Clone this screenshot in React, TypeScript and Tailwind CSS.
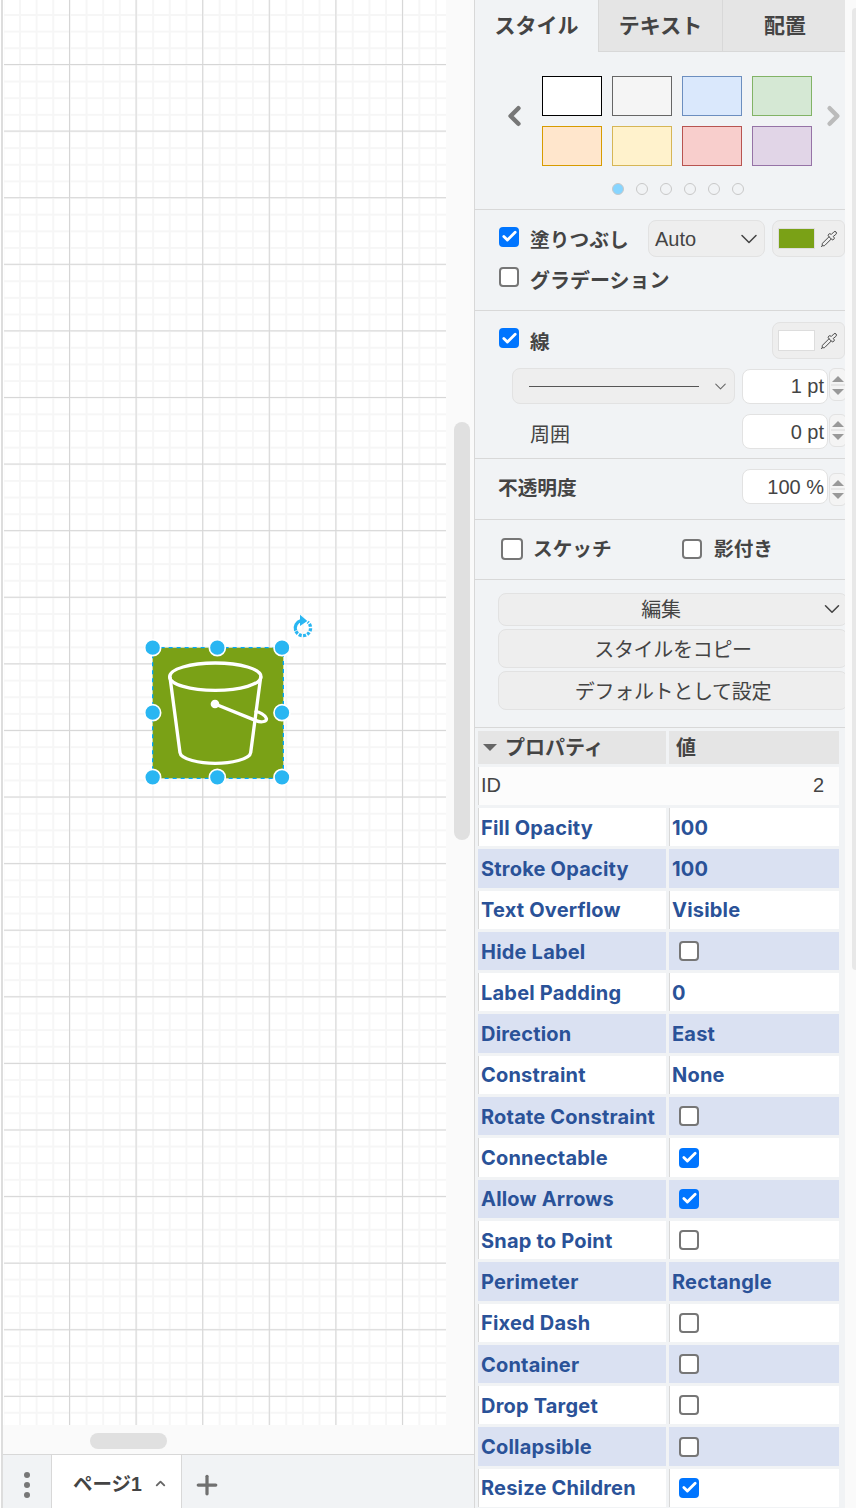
import { Check, ChevronDown, ChevronLeft, ChevronRight, ChevronUp, Pipette, Plus } from "lucide-react";

const swatches = [
  "bg-[#ffffff] border-[#000000]",
  "bg-[#f5f5f5] border-[#666666]",
  "bg-[#dae8fc] border-[#6c8ebf]",
  "bg-[#d5e8d4] border-[#82b366]",
  "bg-[#ffe6cc] border-[#d79b00]",
  "bg-[#fff2cc] border-[#d6b656]",
  "bg-[#f8cecc] border-[#b85450]",
  "bg-[#e1d5e7] border-[#9673a6]",
];

type Prop = { name: string; value?: string; checked?: boolean };

const props: Prop[] = [
  { name: "Fill Opacity", value: "100" },
  { name: "Stroke Opacity", value: "100" },
  { name: "Text Overflow", value: "Visible" },
  { name: "Hide Label", checked: false },
  { name: "Label Padding", value: "0" },
  { name: "Direction", value: "East" },
  { name: "Constraint", value: "None" },
  { name: "Rotate Constraint", checked: false },
  { name: "Connectable", checked: true },
  { name: "Allow Arrows", checked: true },
  { name: "Snap to Point", checked: false },
  { name: "Perimeter", value: "Rectangle" },
  { name: "Fixed Dash", checked: false },
  { name: "Container", checked: false },
  { name: "Drop Target", checked: false },
  { name: "Collapsible", checked: false },
  { name: "Resize Children", checked: true },
];

function Box({ checked = false, big = false, className = "" }: { checked?: boolean; big?: boolean; className?: string }) {
  const size = big ? "w-[22px] h-[22px]" : "w-5 h-5";
  if (checked) {
    return (
      <span className={`${size} shrink-0 rounded-[4px] bg-[#0075ff] flex items-center justify-center ${className}`}>
        <Check size={17} strokeWidth={4} className="text-white" />
      </span>
    );
  }
  return <span className={`${size} block shrink-0 rounded-[4px] bg-white border-2 border-[#767676] ${className}`} />;
}

function ColorButton({ color }: { color: string }) {
  return (
    <div className="w-[73px] h-[37px] shrink-0 rounded-l-lg rounded-r-md bg-[#eeeeee] border border-[#e2e2e2] flex items-center pl-[5px] gap-[5px]">
      <span className={`w-[37px] h-[21px] border border-[#dddddd] ${color}`} />
      <Pipette size={18} strokeWidth={1.3} className="text-[#444444]" />
    </div>
  );
}

function Spinner({ y = "" }: { y?: string }) {
  return (
    <div className={`w-[18px] h-[33px] shrink-0 rounded-md border border-[#e2e2e2] bg-[#f4f4f4] flex flex-col items-center justify-center ${y}`}>
      <svg width="14" height="24" viewBox="0 0 14 24">
        <path d="M7 3 L13 9 H1 Z" fill="#999999" />
        <path d="M0 12 H14" stroke="#d8d8d8" strokeWidth="1" />
        <path d="M7 22 L1 16 H13 Z" fill="#999999" />
      </svg>
    </div>
  );
}

function NumberInput({ value }: { value: string }) {
  return (
    <div className="w-[86px] h-[35px] shrink-0 rounded-lg bg-white border border-[#e2e2e2] flex items-center justify-end pr-[3px] text-[20px] leading-none text-[#444444]">
      {value}
    </div>
  );
}

function ActionButton({ label, h, pad = "" }: { label: string; h: string; pad?: string }) {
  return (
    <div className={`w-[350px] ${h} ${pad} shrink-0 rounded-lg bg-[#eeeeee] border border-[#e2e2e2] flex items-center justify-center text-[20px] tracking-[-0.3px] text-[#444444]`}>
      {label}
    </div>
  );
}

function Canvas() {
  const handles = [
    [68, 143], [262, 143], [456, 143],
    [68, 338], [456, 338],
    [68, 532], [262, 532], [456, 532],
  ];
  return (
    <div className="relative flex-1 ml-[2px] bg-white bg-[linear-gradient(#d6d6d6_1px,transparent_1px),linear-gradient(90deg,#d6d6d6_1px,transparent_1px),linear-gradient(#f6f6f6_1.5px,transparent_1.5px),linear-gradient(90deg,#f6f6f6_1.5px,transparent_1.5px)] bg-[size:66.6px_66.6px,66.6px_66.6px,16.65px_16.65px,16.65px_16.65px] bg-[position:65px_64px,65px_64px,15px_14px,15px_14px]">
      {/* selected bucket shape, coords are 3x of the page */}
      <svg className="absolute left-[126px] top-[600px]" width="200" height="200" viewBox="0 0 600 600">
        <rect x="68" y="143" width="392" height="392" fill="#7aa116" />
        <rect x="68" y="143" width="392" height="392" fill="none" stroke="#00a8ff" strokeWidth="4" strokeDasharray="12 12" />
        <g fill="none" stroke="#ffffff" strokeWidth="10" strokeLinecap="round" strokeLinejoin="round">
          <ellipse cx="256" cy="230" rx="137" ry="41" />
          <path d="M120 232 L150 458 C152 478 210 490 256 490 C302 490 360 478 362 458 L392 232" />
          <path d="M255 312 L378 362 C395 369 412 364 409 355 C406 345 388 336 378 335" />
        </g>
        <circle cx="255" cy="312" r="13" fill="#ffffff" />
        {handles.map(([cx, cy]) => (
          <circle key={`${cx}-${cy}`} cx={cx} cy={cy} r="24" fill="#29b6f2" stroke="#ffffff" strokeWidth="5" />
        ))}
        <g fill="none" stroke="#29b6f2" strokeWidth="10">
          <path d="M513 62 A23 23 0 0 0 497 92" />
          <path d="M498 94 A23 23 0 1 0 533 66" strokeDasharray="9 4" />
        </g>
        <path d="M510 44 L532 63 L510 78 Z" fill="#29b6f2" />
      </svg>
    </div>
  );
}

function Footer() {
  return (
    <div className="h-[54px] flex border-t border-[#d8d8d8] bg-[#f1f3f5]">
      <div className="w-[49px] flex flex-col items-center pt-[17px] gap-[4px] border-r border-[#d8d8d8]">
        <span className="w-[6px] h-[6px] rounded-full bg-[#777777]" />
        <span className="w-[6px] h-[6px] rounded-full bg-[#777777]" />
        <span className="w-[6px] h-[6px] rounded-full bg-[#777777]" />
      </div>
      <div className="w-[130px] bg-white border-r border-[#d8d8d8] flex items-center pt-[6px] pl-[21px] gap-[11px] text-[19.5px] font-bold text-[#444444]">
        <span>ページ1</span>
        <ChevronUp size={15} strokeWidth={3} className="text-[#666666] -mt-[3px]" />
      </div>
      <div className="flex items-center pl-[10px] pt-[6px]">
        <Plus size={30} strokeWidth={2.6} className="text-[#707070]" />
      </div>
    </div>
  );
}

function StylePanel() {
  return (
    <div className="w-[370px] shrink-0 overflow-hidden bg-[#f1f3f5] text-[#444444]">
      <div className="h-[52px] flex text-[21px] font-bold">
        <div className="w-[124px] flex items-center justify-center border-r border-[#d8d8d8]">スタイル</div>
        <div className="w-[124px] flex items-center justify-center bg-[#e5e5e5] border-r border-b border-[#d8d8d8]">テキスト</div>
        <div className="flex-1 flex items-center justify-center pl-[2px] bg-[#e5e5e5] border-b border-[#d8d8d8]">配置</div>
      </div>

      <div className="h-[158px] border-b border-[#d8d8d8] pt-[24px]">
        <div className="flex items-center pl-[28px]">
          <ChevronLeft size={32} strokeWidth={3.5} className="text-[#777777] -mx-[4px] -mt-[10px]" />
          <div className="grid grid-cols-[60px_60px_60px_60px] gap-x-[10px] gap-y-[10px] ml-[16px] mr-[10px]">
            {swatches.map((s) => (
              <span key={s} className={`h-[40px] border ${s}`} />
            ))}
          </div>
          <ChevronRight size={32} strokeWidth={3.5} className="text-[#bbbbbb] -mx-[4px] -mt-[10px]" />
        </div>
        <div className="flex justify-center gap-[12px] mt-[17px] pl-[35px]">
          <span className="w-3 h-3 rounded-full bg-[#87d5ff] border border-[#c8c8c8]" />
          {[1, 2, 3, 4, 5].map((i) => (
            <span key={i} className="w-3 h-3 rounded-full border border-[#c8c8c8]" />
          ))}
        </div>
      </div>

      <div className="h-[101px] border-b border-[#d8d8d8] pl-[24px] pt-[10px]">
        <div className="h-[37px] flex items-center">
          <Box checked className="-mt-[4px]" />
          <span className="ml-[11px] w-[118px] shrink-0 text-[19.7px] font-bold pt-[5px]">塗りつぶし</span>
          <div className="w-[117px] h-[37px] shrink-0 rounded-lg bg-[#eeeeee] border border-[#e2e2e2] flex items-center justify-between pl-[6px] pr-[1px] text-[20px]">
            <span>Auto</span>
            <ChevronDown size={28} strokeWidth={1.3} />
          </div>
          <div className="ml-[7px]">
            <ColorButton color="bg-[#7aa116]" />
          </div>
        </div>
        <div className="flex items-center mt-[1px] h-[38px]">
          <Box />
          <span className="ml-[11px] text-[20px] font-bold pt-[8px]">グラデーション</span>
        </div>
      </div>

      <div className="h-[148px] border-b border-[#d8d8d8] pt-[11px]">
        <div className="h-[37px] flex items-center pl-[24px]">
          <Box checked className="-mt-[5px]" />
          <span className="ml-[11px] flex-1 text-[19.7px] font-bold pt-[5px]">線</span>
          <ColorButton color="bg-white" />
        </div>
        <div className="flex items-center mt-[9px] pl-[37px] gap-[7px] h-[36px]">
          <div className="w-[223px] h-[36px] shrink-0 rounded-lg bg-[#eeeeee] border border-[#e2e2e2] flex items-center pl-[16px] pr-[4px] justify-between">
            <span className="w-[170px] h-px bg-[#555555]" />
            <ChevronDown size={19} strokeWidth={1.3} className="text-[#666666]" />
          </div>
          <NumberInput value="1 pt" />
          <Spinner y="-ml-[6px] -mt-[3px]" />
        </div>
        <div className="flex items-center mt-[10px] pl-[55px] h-[35px]">
          <span className="w-[212px] shrink-0 text-[20px] pt-[6px]">周囲</span>
          <NumberInput value="0 pt" />
          <Spinner y="ml-px -mt-[3px]" />
        </div>
      </div>

      <div className="h-[61px] border-b border-[#d8d8d8] flex items-center pl-[24px] pb-[5px]">
        <span className="w-[243px] shrink-0 -ml-px mr-px text-[19.7px] font-bold pt-[4px]">不透明度</span>
        <NumberInput value="100 %" />
        <Spinner y="ml-px mt-[5px]" />
      </div>

      <div className="h-[60px] border-b border-[#d8d8d8] flex items-center pl-[26px] pb-[2px]">
        <Box big />
        <span className="ml-[10px] w-[149px] shrink-0 text-[19.7px] font-bold pt-[3px]">スケッチ</span>
        <Box />
        <span className="ml-[12px] text-[19.7px] font-bold pt-[3px]">影付き</span>
      </div>

      <div className="h-[148px] border-b border-[#d8d8d8] pt-[13px] pl-[23px] flex flex-col gap-[3px]">
        <div className="relative">
          <ActionButton label="編集" h="h-[33px]" pad="pr-[24px]" />
          <ChevronDown size={26} strokeWidth={1.4} className="absolute left-[321px] top-[3px]" />
        </div>
        <ActionButton label="スタイルをコピー" h="h-[39px]" pad="pt-[2px]" />
        <ActionButton label="デフォルトとして設定" h="h-[39px]" pad="pt-[2px]" />
      </div>

      <div className="pt-[3px] pl-[3px] w-[364px] flex flex-col gap-[3px] font-['Inter','Noto_Sans_CJK_JP',sans-serif]">
        <div className="grid grid-cols-[188px_170px] gap-x-[3px] h-[33px] text-[20px] font-bold">
          <div className="bg-[#e5e5e5] flex items-center pl-[5px] gap-[8px] font-['Liberation_Sans','Noto_Sans_CJK_JP',sans-serif]">
            <span className="w-0 h-0 border-x-[7px] border-x-transparent border-t-[7px] border-t-[#666666]" />
            プロパティ
          </div>
          <div className="bg-[#e5e5e5] flex items-center pl-[7px] font-['Liberation_Sans','Noto_Sans_CJK_JP',sans-serif]">値</div>
        </div>
        <div className="h-[38px] w-[361px] bg-[#fcfcfc] border-l border-[#d8d8d8] flex items-center justify-between pl-[2px] pr-[15px] pb-[2px] text-[20px] font-['Liberation_Sans',sans-serif]">
          <span>ID</span>
          <span>2</span>
        </div>
        {props.map((p, i) => {
          const band = i % 2 === 1;
          return (
            <div key={p.name} className="grid grid-cols-[188px_170px] gap-x-[3px] h-[38.3px] text-[20px] font-bold tracking-[0.2px] text-[#2a5298]">
              <div className={`flex items-center pl-[2px] pt-px border-l whitespace-nowrap ${band ? "bg-[#dae1f2] border-[#dae1f2]" : "bg-white border-[#d8d8d8]"}`}>
                {p.name}
              </div>
              <div className={`flex items-center pl-[2px] pt-px border-l ${band ? "bg-[#dae1f2] border-[#dae1f2]" : "bg-white border-[#d8d8d8]"}`}>
                {p.value !== undefined ? p.value : <Box checked={p.checked} className="ml-[7px] -mt-px" />}
              </div>
            </div>
          );
        })}
      </div>
    </div>
  );
}

export default function App() {
  return (
    <div className="w-[856px] h-[1508px] overflow-hidden flex bg-white font-['Liberation_Sans','Noto_Sans_CJK_JP',sans-serif]">
      <div className="w-[475px] shrink-0 flex flex-col border-r border-[#d8d8d8]">
        <div className="flex-1 flex min-h-0">
          <div className="flex-1 flex flex-col min-w-0 pl-[1px]">
            <div className="flex-1 flex border-l-2 border-[#dddddd] min-h-0">
              <div className="flex flex-1 min-w-0 -ml-[1px]">
                <Canvas />
              </div>
            </div>
          </div>
          <div className="w-[28px] shrink-0 bg-[#fafafa] pt-[422px] pl-[8px]">
            <div className="w-[16px] h-[418px] rounded-full bg-[#e0e0e0]" />
          </div>
        </div>
        <div className="h-[29px] shrink-0 bg-[#fafafa] border-l-2 border-[#dddddd] ml-[1px] pl-[87px] pt-[8px]">
          <div className="w-[77px] h-[16px] rounded-full bg-[#e0e0e0]" />
        </div>
        <div className="ml-[1px] border-l-2 border-[#dddddd]">
          <Footer />
        </div>
      </div>
      <StylePanel />
      <div className="flex-1 bg-[#fafafa] pl-[7px] pt-[8px]">
        <div className="w-[4px] h-[962px] rounded-l-full bg-[#e8e8e8]" />
      </div>
    </div>
  );
}
